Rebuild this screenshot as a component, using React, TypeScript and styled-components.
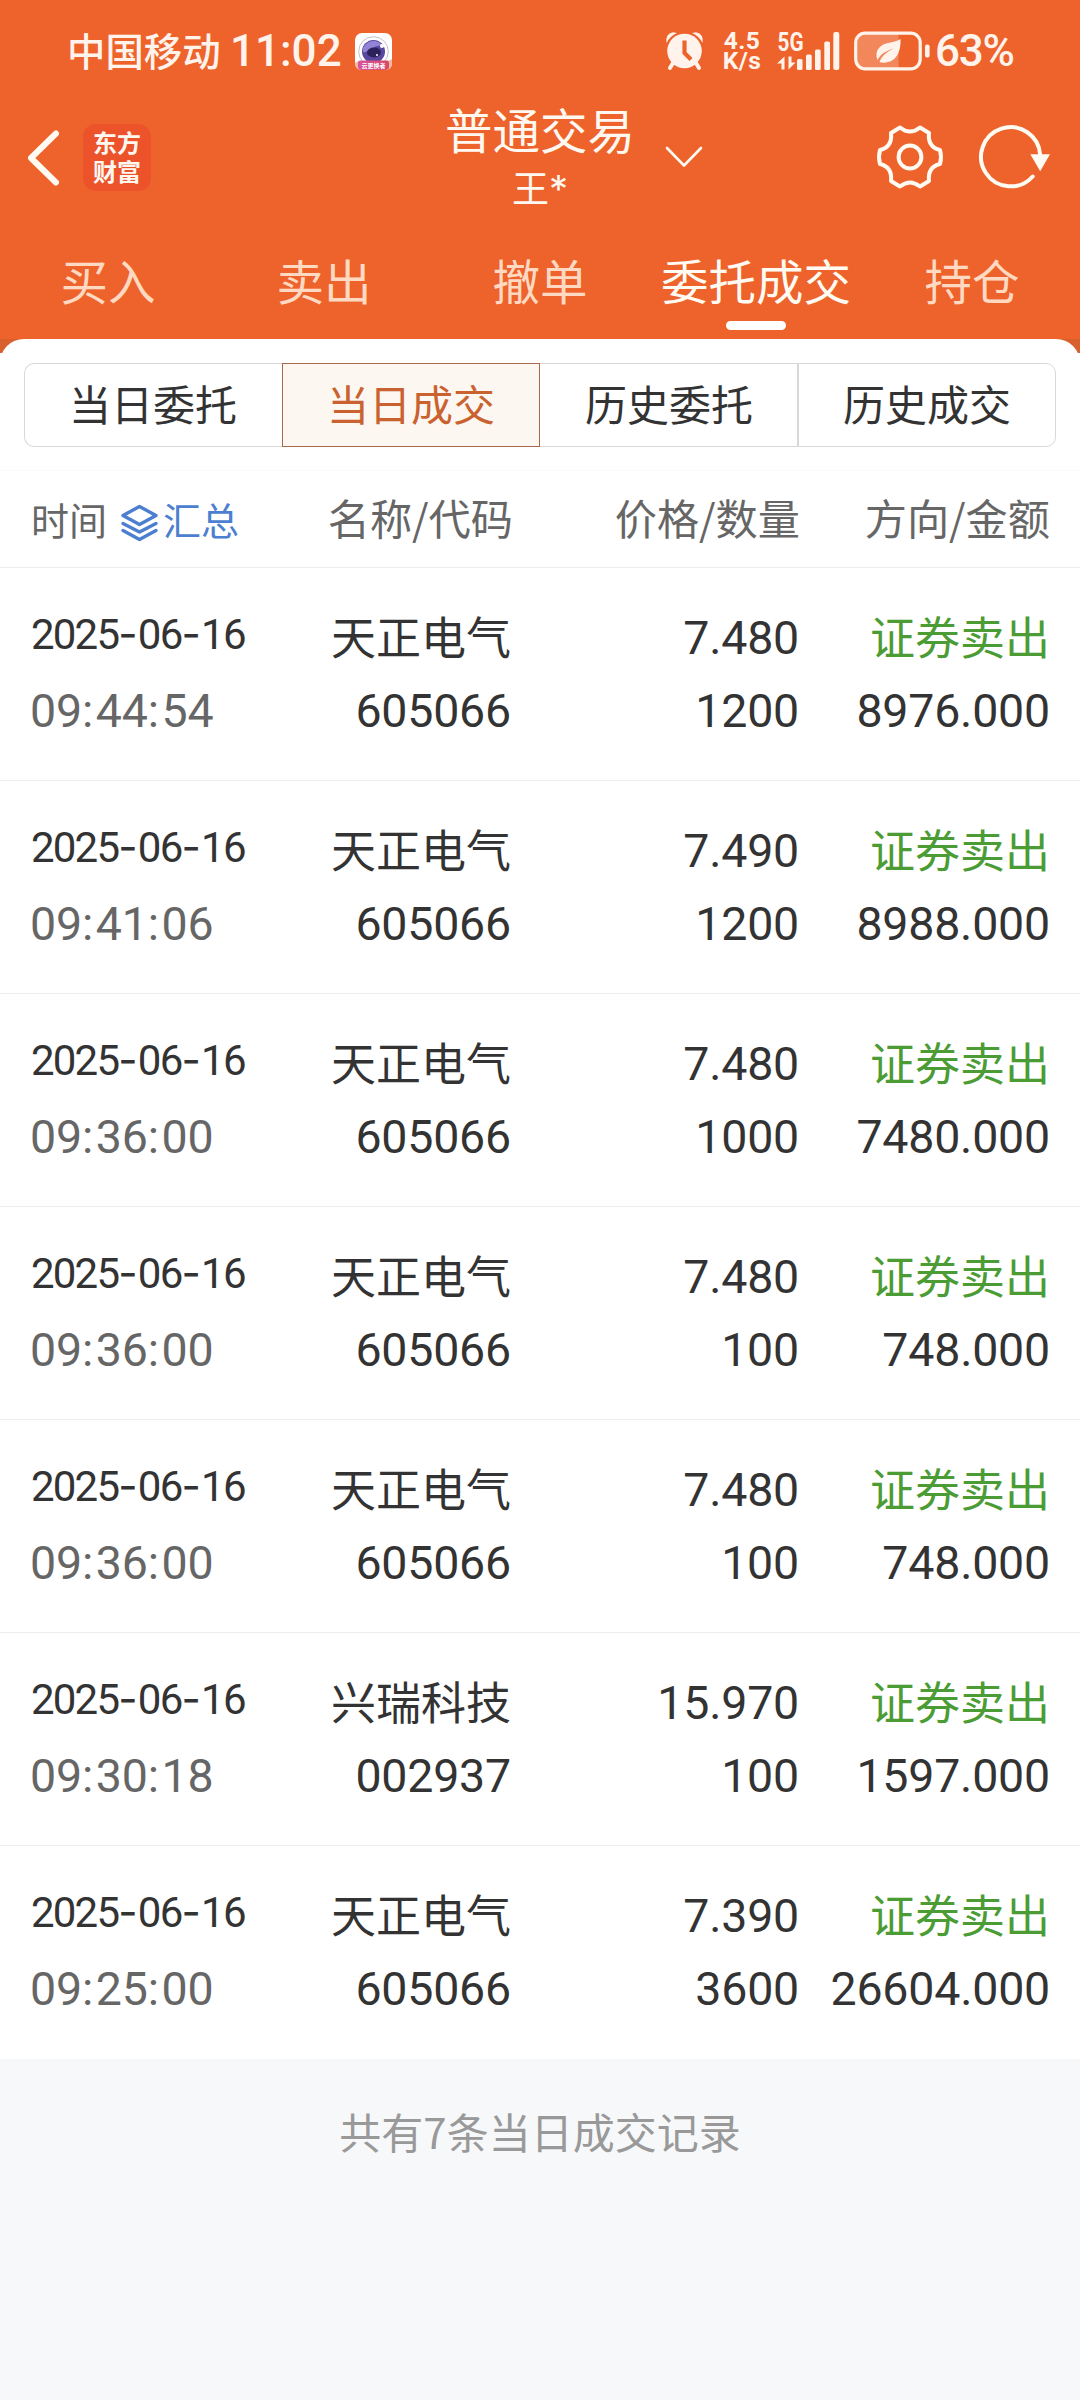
import React from "react";
import styled, { createGlobalStyle } from "styled-components";

const cjk = `"Noto Sans CJK SC", sans-serif`;
const num = `Roboto, "Noto Sans CJK SC", sans-serif`;

const Global = createGlobalStyle`
  html, body { margin: 0; padding: 0; background: #f7f8fa; }
  * { box-sizing: border-box; }
  svg { display: block; flex: none; overflow: visible; }
`;

const Screen = styled.div`
  width: 1080px;
  height: 2400px;
  display: flex;
  flex-direction: column;
  background: #f7f8fa;
  font-family: ${cjk};
  color: #333;
  overflow: hidden;
`;

const Top = styled.header`
  height: 339px;
  flex: none;
  background: #ed632b;
  color: #fff8f1;
`;

const StatusBar = styled.div`
  height: 100px;
  padding: 2px 67px 0 67px;
  display: flex;
  align-items: center;
  justify-content: space-between;
  color: #fff3ec;
`;

const StatusGroup = styled.div`
  display: flex;
  align-items: center;
`;

const Carrier = styled.span`
  width: 155px;
  padding-bottom: 4px;
  font-size: 38.4px;
  line-height: 48px;
  font-weight: 500;
  white-space: nowrap;
`;

const Clock = styled.span`
  width: 133px;
  padding-left: 8px;
  font-family: ${num};
  font-weight: 500;
  font-size: 44px;
  line-height: 48px;
`;

const Speed = styled.div`
  width: 40px;
  margin: 0 15px 0 18px;
  font-family: ${num};
  font-weight: 700;
  font-size: 24.5px;
  line-height: 20px;
  text-align: center;
  letter-spacing: 0.4px;
  white-space: nowrap;
`;

const Battery = styled.span`
  width: 83px;
  padding-left: 5px;
  font-family: ${num};
  font-weight: 500;
  font-size: 44px;
  line-height: 48px;
  letter-spacing: -1.2px;
  white-space: nowrap;
`;

const SignalBox = styled.div`
  margin-right: 14px;
`;

const Nav = styled.div`
  height: 116px;
  display: grid;
  grid-template-columns: 444px 192px 1fr;
  grid-template-rows: 116px;
  align-items: center;
`;

const NavLeft = styled.div`
  display: flex;
  align-items: center;
  padding: 0 0 1px 25px;
  gap: 24px;
`;

const Brand = styled.div`
  width: 68px;
  height: 67px;
  border-radius: 13px;
  background: #ec532b;
  display: flex;
  flex-direction: column;
  align-items: center;
  justify-content: center;
  padding-bottom: 3px;
  font-size: 24px;
  line-height: 29px;
  font-weight: 700;
`;

const NavTitle = styled.div`
  height: 116px;
  display: flex;
  flex-direction: column;
  align-items: center;
  white-space: nowrap;
`;

const Title = styled.h1`
  margin: -2px 0 0;
  font-size: 47.5px;
  line-height: 62px;
  font-weight: 400;
`;

const User = styled.div`
  font-size: 37px;
  line-height: 54px;
`;

const Star = styled.span`
  font-family: Inter, sans-serif;
  font-size: 38px;
`;

const NavRight = styled.div`
  display: flex;
  align-items: center;
  justify-content: space-between;
  padding: 0 30px 2px 29px;
`;

const NavIcons = styled.div`
  display: flex;
  align-items: center;
  gap: 34px;
`;

const Tabs = styled.nav`
  height: 123px;
  display: grid;
  grid-template-columns: repeat(5, 1fr);
`;

const Tab = styled.div<{ $active?: boolean }>`
  display: flex;
  flex-direction: column;
  align-items: center;
  padding-top: 31px;
  font-size: 47.5px;
  line-height: 66px;
  color: ${(p) => (p.$active ? "#fffaf2" : "#ffd9c2")};
`;

const Marker = styled.span`
  width: 60px;
  height: 9px;
  margin-top: 8px;
  border-radius: 5px;
  background: #fff;
`;

const PanelTop = styled.div`
  height: 132px;
  flex: none;
  background: linear-gradient(#d8602c 14px, #fff 14px);
`;

const Panel = styled.div`
  height: 132px;
  padding: 24px 24px 0;
  background: #fff;
  border-radius: 24px 24px 0 0;
  border-bottom: 1px solid #fafafa;
`;

const Segments = styled.div`
  height: 84px;
  display: grid;
  grid-template-columns: repeat(4, 1fr);
`;

const Segment = styled.div<{ $active?: boolean }>`
  display: flex;
  align-items: center;
  justify-content: center;
  padding: 0 0 4px 0;
  font-size: 42px;
  line-height: 60px;
  color: ${(p) => (p.$active ? "#c9622f" : "#333")};
  background: ${(p) => (p.$active ? "#fdf7f2" : "#fff")};
  border: 1px solid ${(p) => (p.$active ? "#a8694c" : "#d8d8d8")};
  &:first-child { border-radius: 10px 0 0 10px; border-right: 0; padding-right: 1px; }
  &:last-child { border-radius: 0 10px 10px 0; }
  &:nth-child(3) { border-left: 0; padding-left: 1px; }
`;

const HeadRow = styled.div`
  height: 97px;
  flex: none;
  display: grid;
  grid-template-columns: 220px 262px 287px 1fr;
  padding: 0 30px 4px 31px;
  align-items: center;
  background: #fff;
  border-bottom: 1px solid #ececec;
  color: #666;
  font-size: 42.2px;
  line-height: 60px;
  text-align: right;
`;

const HeadTime = styled.div`
  display: flex;
  align-items: center;
  padding-top: 4px;
  font-size: 38px;
`;

const Summary = styled.span`
  display: flex;
  align-items: center;
  margin-left: 14px;
  gap: 5px;
  color: #4c7fd0;
  white-space: nowrap;
`;

const LayersBox = styled.span`
  padding-top: 7px;
`;

const Row = styled.div`
  height: 213px;
  flex: none;
  display: grid;
  grid-template-columns: 250px 230px 288px 1fr;
  padding: 37px 30px 0 31px;
  background: #fff;
  border-bottom: 1px solid #ececec;
  &:last-of-type { border-bottom-color: #fff; }
`;

const List = styled.div`
  flex: none;
`;

const Cell = styled.div<{ $left?: boolean }>`
  display: flex;
  flex-direction: column;
  align-items: ${(p) => (p.$left ? "flex-start" : "flex-end")};
  white-space: nowrap;
`;

const Name = styled.div<{ $sell?: boolean }>`
  font-size: 45px;
  line-height: 62px;
  height: 73px;
  color: ${(p) => (p.$sell ? "#4b9c34" : "#333")};
`;

const Digits = styled.div<{ $grey?: boolean }>`
  font-family: ${num};
  font-size: 46.5px;
  line-height: 66px;
  height: 73px;
  letter-spacing: -0.2px;
  margin-left: ${(p) => (p.$grey ? "-1px" : "0")};
  color: ${(p) => (p.$grey ? "#666" : "#333")};
`;

const DateText = styled.div`
  font-family: ${num};
  font-size: 42px;
  line-height: 58px;
  height: 73px;
  letter-spacing: -1.8px;
`;

const Dash = styled.span`
  font-family: Inter, sans-serif;
  letter-spacing: 0.3px;
`;

const Colon = styled.span`
  letter-spacing: 2.6px;
`;

const Footer = styled.footer`
  padding-top: 40px;
  text-align: center;
  color: #999;
  font-size: 42px;
  line-height: 64px;
`;

const AppBadge = () => (
  <svg width="37" height="37" viewBox="0 0 37 37">
    <defs>
      <linearGradient id="ribbon" x1="0" x2="1">
        <stop offset="0" stopColor="#d6559b" />
        <stop offset="1" stopColor="#d9486a" />
      </linearGradient>
    </defs>
    <rect width="37" height="37" rx="7" fill="#fff" />
    <path d="M0 30l4-2h29l4-2v4q0 7-7 7H7q-7 0-7-7z" fill="#f2b8a0" />
    <circle cx="18.500" cy="18.500" r="14.800" fill="none" stroke="#c3c0cc" strokeWidth="1" />
    <circle cx="18.500" cy="18.500" r="11.500" fill="#5a479f" />
    <path d="M8 15q4-8 12-7 6 1 7 5-6-1-10 3-5 4-9 3z" fill="#9384d6" />
    <ellipse cx="19" cy="19.500" rx="7" ry="5" fill="#2c2159" />
    <circle cx="27" cy="13" r="2" fill="#fff" />
    <circle cx="22" cy="22" r="1" fill="#fff" />
    <path d="M5 27.500h27q2 0 2 3v3q0 3.500-4 3.500H7q-4 0-4-3.500v-3q0-3 2-3z" fill="url(#ribbon)" />
    <text x="18.500" y="34.600" fontSize="6" fontFamily="Noto Sans CJK SC, sans-serif" fontWeight="700" fill="#fff" textAnchor="middle">云更换者</text>
  </svg>
);

const Alarm = () => (
  <svg width="38" height="40" viewBox="0 0 38 40" fill="#fff3ec">
    <circle cx="18.500" cy="20" r="17.300" />
    <path d="M0.500 12Q-1 3 7 1.200L11 2Q4 5 0.500 12zM36.500 12Q38 3 30 1.200L26 2Q33 5 36.500 12z" />
    <path d="M7 32L4 37M30 32l3 5" stroke="#fff3ec" strokeWidth="4" strokeLinecap="round" />
    <path d="M18.500 11.500v10.500l5 5" stroke="#ed632b" strokeWidth="4.200" fill="none" strokeLinecap="square" />
  </svg>
);

const Signal = () => (
  <svg width="63" height="40" viewBox="0 0 63 40" fill="#fff3ec">
    <text x="0.500" y="19.600" fontSize="25.500" fontFamily="Roboto, sans-serif" fontWeight="700" textLength="26" lengthAdjust="spacingAndGlyphs">5G</text>
    <path d="M7.500 25.500L0 32.500h4.500v6h3zM11.500 25.500v13l7-7h-4v-6z" />
    <rect x="20" y="28" width="5.500" height="11" rx="1.500" />
    <rect x="29" y="23.500" width="5.700" height="15.500" rx="1.500" />
    <rect x="38" y="18.500" width="5.700" height="20.500" rx="1.500" />
    <rect x="47.300" y="10.500" width="5.700" height="28.500" rx="1.500" />
    <rect x="56.300" y="1" width="6" height="38" rx="2" />
  </svg>
);

const BatteryIcon = () => (
  <svg width="76" height="40" viewBox="0 0 76 40">
    <path d="M12 3h32.500v34H12q-9 0-9-9V12q0-9 9-9z" fill="#f1875b" />
    <rect x="1.700" y="2.200" width="64.500" height="35.600" rx="9.500" fill="none" stroke="#fff3ec" strokeWidth="3.200" />
    <rect x="71" y="13.500" width="4.600" height="13" rx="2" fill="#fff3ec" />
    <path d="M46.500 8C47 18 44 30 32 31.500Q28 32 25.500 31C28 24.500 33 20.500 40 17.500 31 20 26 24 23.500 29 20 20 26 13.500 34 12 39 11 43 10.500 46.500 8Z" fill="#fff3ec" />
  </svg>
);

const Back = () => (
  <svg width="34" height="56" viewBox="0 0 34 56" fill="none" stroke="#fffaf2" strokeWidth="6" strokeLinecap="round" strokeLinejoin="round">
    <path d="M31 3.500L6 28l25 24.500" />
  </svg>
);

const Chevron = () => (
  <svg width="38" height="22" viewBox="0 0 38 22" fill="none" stroke="#fffaf2" strokeWidth="2.600" strokeLinecap="round" strokeLinejoin="round">
    <path d="M2 2l17 17.500L36 2" />
  </svg>
);

const Gear = () => (
  <svg width="68" height="66" viewBox="0 0 68 66" fill="none" stroke="#fffaf2" strokeWidth="4" strokeLinejoin="round">
    <path d="M24 3.500Q34 11.500 44 3.500L53 9C52 18 55.500 24 64 26Q66 33 64 40C55.500 42 52 48 53 57L44 62.500Q34 54.500 24 62.500L15 57C16 48 12.500 42 4 40Q2 33 4 26C12.500 24 16 18 15 9Z" />
    <circle cx="34" cy="33" r="11.400" />
  </svg>
);

const Refresh = () => (
  <svg width="72" height="66" viewBox="0 0 72 66">
    <path d="M54.700 52.500A29.600 29.600 0 1 1 62.200 31" fill="none" stroke="#fffaf2" strokeWidth="4" strokeLinecap="round" />
    <path d="M52.300 30.300H72L62.200 47.300z" fill="#fffaf2" />
  </svg>
);

const Layers = () => (
  <svg width="37" height="38" viewBox="0 0 37 38" fill="none" stroke="#4c7fd0" strokeWidth="3.400" strokeLinejoin="round" strokeLinecap="round">
    <path d="M18.500 2.500L35 11.500 18.500 20.500 2 11.500z" />
    <path d="M2 19.500l16.500 8.500L35 19.500M2 26.500L18.500 35.500 35 26.500" />
  </svg>
);

interface Trade {
  time: string;
  name: string;
  code: string;
  price: string;
  qty: string;
  amount: string;
}

const trades: Trade[] = [
  { time: "09:44:54", name: "天正电气", code: "605066", price: "7.480", qty: "1200", amount: "8976.000" },
  { time: "09:41:06", name: "天正电气", code: "605066", price: "7.490", qty: "1200", amount: "8988.000" },
  { time: "09:36:00", name: "天正电气", code: "605066", price: "7.480", qty: "1000", amount: "7480.000" },
  { time: "09:36:00", name: "天正电气", code: "605066", price: "7.480", qty: "100", amount: "748.000" },
  { time: "09:36:00", name: "天正电气", code: "605066", price: "7.480", qty: "100", amount: "748.000" },
  { time: "09:30:18", name: "兴瑞科技", code: "002937", price: "15.970", qty: "100", amount: "1597.000" },
  { time: "09:25:00", name: "天正电气", code: "605066", price: "7.390", qty: "3600", amount: "26604.000" },
];

const TimeText = ({ value }: { value: string }) => {
  const [h, m, s] = value.split(":");
  return (
    <Digits $grey>
      {h}<Colon>:</Colon>{m}<Colon>:</Colon>{s}
    </Digits>
  );
};

export default function App() {
  return (
    <>
      <Global />
      <Screen>
        <Top>
          <StatusBar>
            <StatusGroup>
              <Carrier>中国移动</Carrier>
              <Clock>11:02</Clock>
              <AppBadge />
            </StatusGroup>
            <StatusGroup>
              <Alarm />
              <Speed>4.5<br />K/s</Speed>
              <SignalBox><Signal /></SignalBox>
              <BatteryIcon />
              <Battery>63%</Battery>
            </StatusGroup>
          </StatusBar>
          <Nav>
            <NavLeft>
              <Back />
              <Brand><span>东方</span><span>财富</span></Brand>
            </NavLeft>
            <NavTitle>
              <Title>普通交易</Title>
              <User>王<Star>*</Star></User>
            </NavTitle>
            <NavRight>
              <Chevron />
              <NavIcons><Gear /><Refresh /></NavIcons>
            </NavRight>
          </Nav>
          <Tabs>
            <Tab>买入</Tab>
            <Tab>卖出</Tab>
            <Tab>撤单</Tab>
            <Tab $active>委托成交<Marker /></Tab>
            <Tab>持仓</Tab>
          </Tabs>
        </Top>
        <PanelTop>
          <Panel>
            <Segments>
              <Segment>当日委托</Segment>
              <Segment $active>当日成交</Segment>
              <Segment>历史委托</Segment>
              <Segment>历史成交</Segment>
            </Segments>
          </Panel>
        </PanelTop>
        <HeadRow>
          <HeadTime>时间<Summary><LayersBox><Layers /></LayersBox>汇总</Summary></HeadTime>
          <div>名称/代码</div>
          <div>价格/数量</div>
          <div>方向/金额</div>
        </HeadRow>
        <List>
          {trades.map((t, i) => (
            <Row key={i}>
              <Cell $left>
                <DateText>2025<Dash>-</Dash>06<Dash>-</Dash>16</DateText>
                <TimeText value={t.time} />
              </Cell>
              <Cell><Name>{t.name}</Name><Digits>{t.code}</Digits></Cell>
              <Cell><Digits>{t.price}</Digits><Digits>{t.qty}</Digits></Cell>
              <Cell><Name $sell>证券卖出</Name><Digits>{t.amount}</Digits></Cell>
            </Row>
          ))}
        </List>
        <Footer>共有7条当日成交记录</Footer>
      </Screen>
    </>
  );
}
